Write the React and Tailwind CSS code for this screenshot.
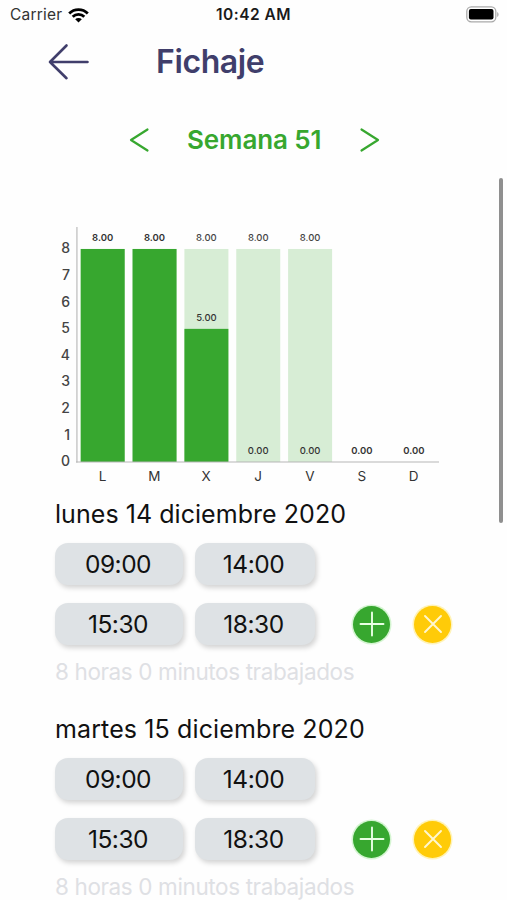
const GREEN = '#37a72f'

const week = [
  { label: 'L', planned: 8, worked: 8 },
  { label: 'M', planned: 8, worked: 8 },
  { label: 'X', planned: 8, worked: 5 },
  { label: 'J', planned: 8, worked: 0 },
  { label: 'V', planned: 8, worked: 0 },
  { label: 'S', planned: 0, worked: 0 },
  { label: 'D', planned: 0, worked: 0 },
]

const days = [
  {
    title: 'lunes 14 diciembre 2020',
    titleClass: 'tracking-[0.05px]',
    shifts: [
      ['09:00', '14:00'],
      ['15:30', '18:30'],
    ],
    total: '8 horas 0 minutos trabajados',
  },
  {
    title: 'martes 15 diciembre 2020',
    titleClass: 'tracking-[0.12px]',
    shifts: [
      ['09:00', '14:00'],
      ['15:30', '18:30'],
    ],
    total: '8 horas 0 minutos trabajados',
  },
]

const StatusBar = () => (
  <div className="grid h-[30px] grid-cols-3 items-center pr-[8px] pl-[10px] text-[15.5px] leading-none">
    <div className="flex items-center gap-[6px] text-[#333]">
      <span className="tracking-[0.2px]">Carrier</span>
      <svg width="21" height="15" viewBox="0 0 21 15" fill="none" stroke="#000" strokeWidth="2.8">
        <path d="M1.2 5.4a13.2 13.2 0 0 1 18.6 0" />
        <path d="M4.7 8.7a8.2 8.2 0 0 1 11.6 0" />
        <path d="M10.5 14.4 7.2 11.3a4.7 4.7 0 0 1 6.6 0z" fill="#000" stroke="none" />
      </svg>
    </div>
    <div className="-ml-[2px] text-center font-semibold tracking-[0.5px] whitespace-nowrap text-[#1a1a1a]">
      10:42 AM
    </div>
    <div className="flex justify-end">
      <svg className="-mt-[2px]" width="33" height="17" viewBox="0 0 33 17">
        <rect x="0.8" y="0.8" width="29" height="15" rx="4.5" fill="#fff" stroke="#aaa" strokeWidth="1.3" />
        <rect x="2.9" y="3" width="24.6" height="10.5" rx="2" fill="#000" />
        <path d="M31.2 6v5c1.8-.8 1.8-4.2 0-5z" fill="#aaa" />
      </svg>
    </div>
  </div>
)

const Header = () => (
  <header className="flex h-[64px] items-center pl-[48px]">
    <svg width="42" height="38" viewBox="0 0 42 38" fill="none" stroke="#403e6b" strokeWidth="2.6" strokeLinecap="round" strokeLinejoin="round">
      <path d="M18.5 2.5 2 19l16.5 16.2M2 19h37.5" />
    </svg>
    <h1 className="ml-[66px] text-[32px] leading-none font-semibold tracking-[-0.4px] text-[#403e6b]">
      Fichaje
    </h1>
  </header>
)

const WeekSelector = () => (
  <div className="mt-[26px] flex h-[40px] items-center pl-[129px] text-[#37a72f]">
    <svg width="21" height="26" viewBox="0 0 21 26" fill="none" stroke="currentColor" strokeWidth="2.2" strokeLinecap="round" strokeLinejoin="round">
      <path d="M18.5 2.5 2 13l16.5 10.5" />
    </svg>
    <span className="ml-[37px] w-[136px] text-[26px] leading-none font-semibold tracking-[-0.1px] whitespace-nowrap">
      Semana 51
    </span>
    <svg className="ml-[36px]" width="21" height="26" viewBox="0 0 21 26" fill="none" stroke="currentColor" strokeWidth="2.2" strokeLinecap="round" strokeLinejoin="round">
      <path d="M2.5 2.5 19 13 2.5 23.5" />
    </svg>
  </div>
)

const HoursChart = () => {
  const base = 242
  const unit = 26.63
  const pitch = 51.85

  return (
    <svg className="mt-[60px] ml-[50px] block" width="400" height="270" viewBox="0 0 400 270">
      <path d="M26.9 7v235.5" stroke="#ccc" strokeWidth="1.6" />
      {week.map((day, i) => {
        const x = 30.7 + i * pitch
        return (
          <g key={day.label} textAnchor="middle">
            <rect x={x} y={base - day.planned * unit} width="44" height={day.planned * unit} fill="#d7edd5" />
            <rect x={x} y={base - day.worked * unit} width="44" height={day.worked * unit} fill={GREEN} />
            {day.planned > day.worked && (
              <text x={x + 22} y={base - day.planned * unit - 7.7} fontSize="9.5" fontWeight="500" fill="#444">
                {day.planned.toFixed(2)}
              </text>
            )}
            <text
              x={x + 22}
              y={base - day.worked * unit - 7.7}
              fontSize="9.5"
              fontWeight={day.planned === day.worked ? 600 : 500}
              fill="#333"
            >
              {day.worked.toFixed(2)}
            </text>
            <text x={x + 21.8} y="261" fontSize="13.5" fill="#333">
              {day.label}
            </text>
          </g>
        )
      })}
      <path d="M26 242h363" stroke="#b5b5b5" strokeWidth="1.2" />
      {[0, 1, 2, 3, 4, 5, 6, 7, 8].map((hour) => (
        <text key={hour} x="20" y={base + 4.3 - hour * unit} textAnchor="end" fontSize="14" fontWeight="500" fill="#444">
          {hour}
        </text>
      ))}
    </svg>
  )
}

const TimePill = ({ className, children }) => (
  <div
    className={`flex h-[42px] items-center justify-center rounded-[13px] bg-[#dee2e5] text-[24.5px] leading-none tracking-[-0.5px] text-[#111] shadow-[2px_3px_5px_rgba(0,0,0,0.17)] ${className}`}
  >
    {children}
  </div>
)

const ActionButton = ({ className, path }) => (
  <button className={`flex size-[37px] items-center justify-center rounded-full ${className}`}>
    <svg width="26" height="26" viewBox="0 0 26 26" fill="none" stroke="currentColor" strokeWidth="1.9" strokeLinecap="round">
      <path d={path} />
    </svg>
  </button>
)

const DayCard = ({ day }) => (
  <section className="h-[215px] pl-[55px]">
    <h2 className={`flex h-[48px] items-center text-[25px] leading-none whitespace-nowrap text-[#111] ${day.titleClass}`}>
      {day.title}
    </h2>
    <div className="mt-[5px] flex flex-col gap-[18px]">
      {day.shifts.map(([start, end], i) => (
        <div key={start} className="flex items-center">
          <TimePill className="w-[128px] pr-[2px]">{start}</TimePill>
          <TimePill className="ml-[12px] w-[120px] pr-[3px]">{end}</TimePill>
          {i === day.shifts.length - 1 && (
            <div className="ml-[38px] flex gap-[24px]">
              <ActionButton
                className="bg-[#37a72f] text-[#e8ffe4] shadow-[0_0_0_1.5px_#d5f5d2]"
                path="M13 1.5v23M1.5 13h23"
              />
              <ActionButton
                className="bg-[#ffcb08] text-[#fff7d0] shadow-[0_0_0_1.5px_#fff3b8]"
                path="M5 5l16 16M21 5 5 21"
              />
            </div>
          )}
        </div>
      ))}
    </div>
    <p className="mt-[15px] text-[22.5px] leading-[24px] tracking-[-0.38px] whitespace-nowrap text-[#dee0e4]">
      {day.total}
    </p>
  </section>
)

export default function App() {
  return (
    <div className="relative h-[900px] w-full overflow-hidden bg-[#fefefe] font-['Inter',sans-serif]">
      <StatusBar />
      <Header />
      <WeekSelector />
      <HoursChart />
      {days.map((day) => (
        <DayCard key={day.title} day={day} />
      ))}
      <div className="absolute top-[178px] right-[4px] h-[345px] w-[4px] rounded-full bg-[#8f8f8f]" />
    </div>
  )
}
